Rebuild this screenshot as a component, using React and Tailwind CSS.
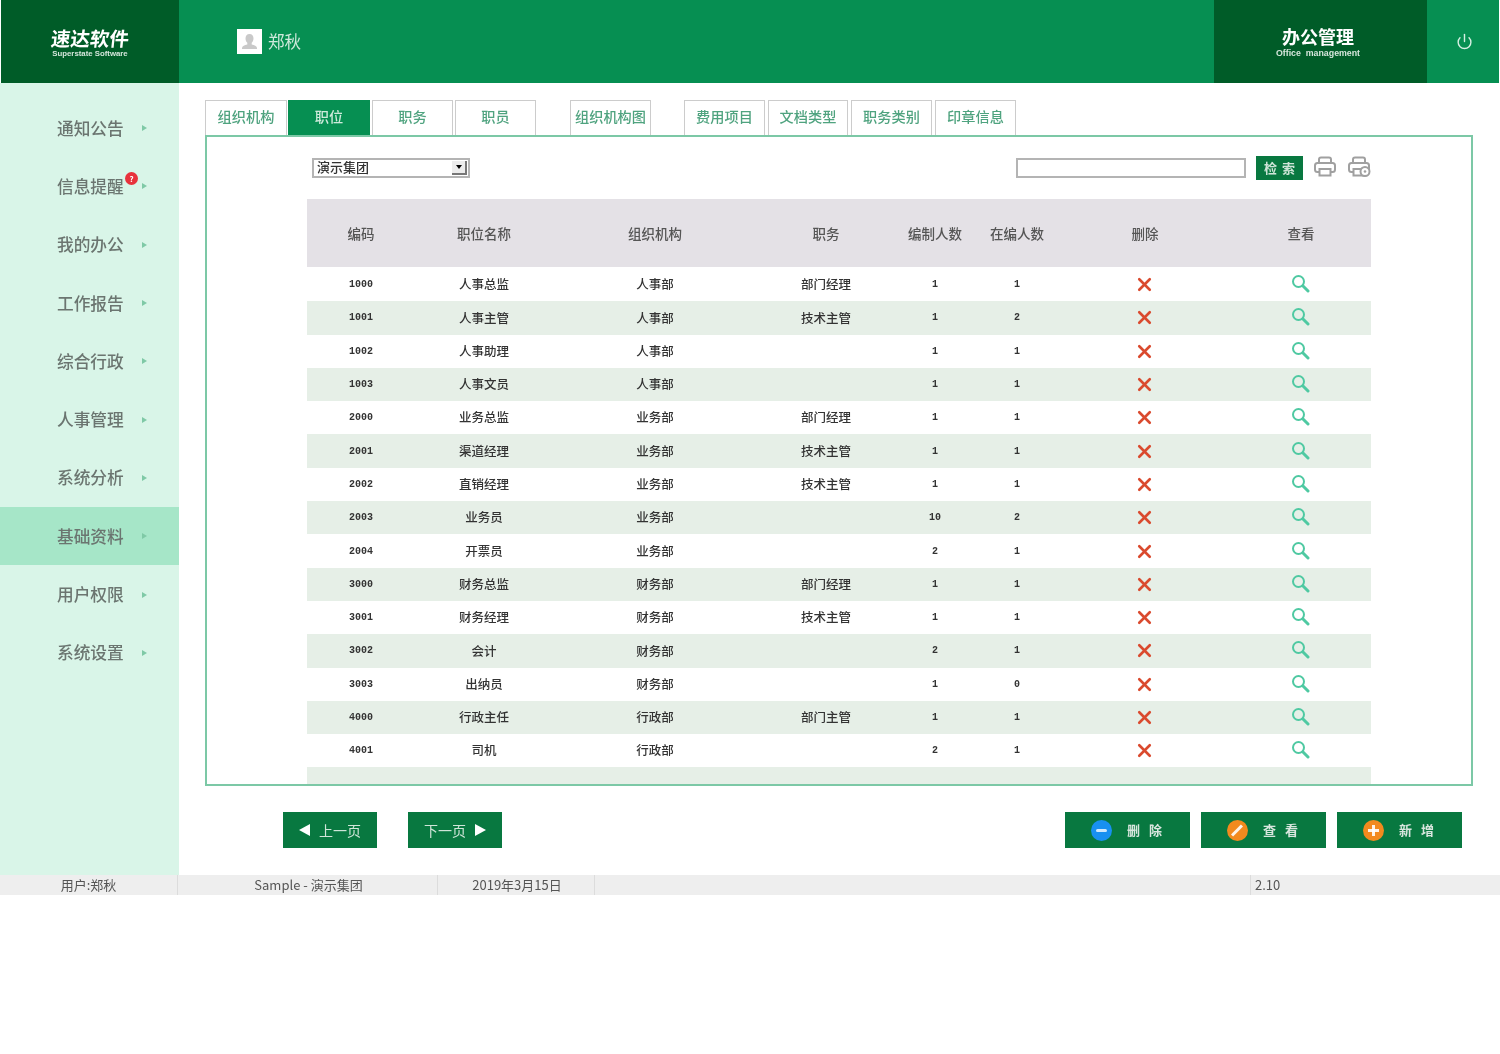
import React from "react";
import { X, Power } from "lucide-react";

const cjk = "font-['Noto_Sans_CJK_SC','Noto_Sans',sans-serif]";
const menu = ["通知公告", "信息提醒", "我的办公", "工作报告", "综合行政", "人事管理", "系统分析", "基础资料", "用户权限", "系统设置"];
const tabs = [
  ["组织机构", "w-[82px]"],
  ["职位", "w-[82px] ml-px"],
  ["职务", "w-[81px] ml-[2px]"],
  ["职员", "w-[81px] ml-[2px]"],
  ["组织机构图", "w-[81px] ml-[34px]"],
  ["费用项目", "w-[81px] ml-[33px]"],
  ["文档类型", "w-[80px] ml-[3px]"],
  ["职务类别", "w-[81px] ml-[3px]"],
  ["印章信息", "w-[81px] ml-[3px]"],
];
const cols = "grid grid-cols-[108px_138px_204px_138px_80px_84px_172px_140px]";
const heads = ["编码", "职位名称", "组织机构", "职务", "编制人数", "在编人数", "删除", "查看"];
const rows = [
  ["1000", "人事总监", "人事部", "部门经理", "1", "1"],
  ["1001", "人事主管", "人事部", "技术主管", "1", "2"],
  ["1002", "人事助理", "人事部", "", "1", "1"],
  ["1003", "人事文员", "人事部", "", "1", "1"],
  ["2000", "业务总监", "业务部", "部门经理", "1", "1"],
  ["2001", "渠道经理", "业务部", "技术主管", "1", "1"],
  ["2002", "直销经理", "业务部", "技术主管", "1", "1"],
  ["2003", "业务员", "业务部", "", "10", "2"],
  ["2004", "开票员", "业务部", "", "2", "1"],
  ["3000", "财务总监", "财务部", "部门经理", "1", "1"],
  ["3001", "财务经理", "财务部", "技术主管", "1", "1"],
  ["3002", "会计", "财务部", "", "2", "1"],
  ["3003", "出纳员", "财务部", "", "1", "0"],
  ["4000", "行政主任", "行政部", "部门主管", "1", "1"],
  ["4001", "司机", "行政部", "", "2", "1"],
];

function Cell({ children, mono }) {
  return (
    <div className={`flex items-center justify-center ${mono ? "font-['Liberation_Mono',monospace] text-[10px] font-bold" : "text-[12.5px] font-medium"}`}>
      {children}
    </div>
  );
}

function Arrow() {
  return <span className="ml-auto h-0 w-0 border-y-[3.5px] border-l-[5px] border-y-transparent border-l-[#7fc9a6]" />;
}

function Lens() {
  return (
    <svg width="19" height="19" viewBox="0 0 19 19" fill="none" className="-translate-x-[1px] -translate-y-[1px]">
      <circle cx="7.500" cy="7.500" r="5.500" stroke="#4fc9a2" strokeWidth="2" />
      <path d="M12 12l5 5" stroke="#4fc9a2" strokeWidth="3" strokeLinecap="round" />
    </svg>
  );
}

function PrinterIcon({ round }) {
  return (
    <svg width="24" height="24" viewBox="0 0 24 24" fill="none" stroke="#a0a0a0" strokeWidth="2">
      <path d="M6 8V4.500C6 3.500 7 2.500 8 2.500h8c1 0 2 1 2 2V8" />
      <path d="M6 17H4.500C3 17 2 16 2 14.500v-4C2 9 3 8 4.500 8h15c1.500 0 2.500 1 2.500 2.500v4c0 1.500-1 2.500-2.500 2.500H18" />
      <path d="M6.500 14h11v6.500h-11z" />
      {round && <circle cx="18" cy="16.500" r="4.500" fill="white" />}
      {round && <circle cx="18" cy="16.500" r="1.300" fill="#a0a0a0" stroke="none" />}
    </svg>
  );
}

function ActionButton({ label, color, sign }) {
  return (
    <button className="flex h-[36px] w-[125px] items-center justify-center gap-[15px] pr-[2px] bg-[#087840] text-[13px] font-bold text-[#d8e6de]">
      <span className={`relative flex h-[21px] w-[21px] items-center justify-center rounded-full ${color}`}>
        {sign === "minus" && <span className="h-[3px] w-[11px] rounded-sm bg-white/80" />}
        {sign === "edit" && <span className="h-[3px] w-[14px] -rotate-45 bg-white/90" />}
        {sign === "plus" && (
          <>
            <span className="h-[3px] w-[11px] bg-white/90" />
            <span className="absolute h-[11px] w-[3px] bg-white/90" />
          </>
        )}
      </span>
      <span className="-mr-[9px] tracking-[9px]">{label}</span>
    </button>
  );
}

export default function App() {
  return (
    <div className={`flex h-[895px] flex-col bg-white text-[#333] blur-[0.7px] ${cjk}`}>
      <header className="mx-px flex h-[83px] shrink-0 bg-[#068f52] text-white">
        <div className="flex w-[178px] flex-col items-center justify-center bg-[#005c28]">
          <div className="-skew-x-6 text-[19.5px] font-bold leading-[24px]">速达软件</div>
          <div className="font-['Liberation_Sans',sans-serif] text-[7.8px] font-bold leading-[7px] text-[#d5e6dc]">Superstate Software</div>
        </div>
        <div className="ml-[58px] flex items-center gap-[6px]">
          <svg width="25" height="25" viewBox="0 0 25 25" className="bg-white">
            <path d="M12.500 5c2.600 0 4 2 4 4.500 0 1.800-.8 3.300-1.800 4.200v1.800c2.500.7 5.300 1.800 5.300 3.500v1H5v-1c0-1.700 2.800-2.800 5.300-3.500v-1.800c-1-.9-1.800-2.400-1.800-4.200C8.500 7 9.900 5 12.500 5z" fill="#c9c9c9" />
          </svg>
          <span className="text-[16.5px] text-[#cfe9dc]">郑秋</span>
        </div>
        <div className="ml-auto flex w-[213px] flex-col items-center justify-center bg-[#005c28] pb-[2px] pr-[5px]">
          <div className="text-[18px] font-bold leading-[25px]">办公管理</div>
          <div className="font-['Liberation_Sans',sans-serif] text-[8.8px] font-bold leading-[9px] text-[#d5e6dc]">Office&nbsp;&nbsp;management</div>
        </div>
        <div className="flex w-[72px] items-center justify-center pl-[2px]">
          <Power size={17} strokeWidth={2} className="text-[#d5efe2]" />
        </div>
      </header>

      <div className="flex min-h-0 flex-1">
        <aside className="w-[179px] shrink-0 bg-[#d9f5e8] pt-[16px]">
          {menu.map((m, i) => (
            <div key={m} className={`relative flex h-[58.3px] items-center pl-[57px] pr-[32px] text-[16.7px] font-medium text-[#6b7570] ${i === 7 ? "bg-[#a6e6c8]" : ""}`}>
              <span className="whitespace-nowrap">{m}</span>
              {i === 1 && (
                <span className="absolute left-[125px] top-[15px] flex h-[13px] w-[13px] items-center justify-center rounded-full bg-[#e8323c] text-[8px] font-bold text-white">?</span>
              )}
              <Arrow />
            </div>
          ))}
        </aside>

        <main className="min-w-0 flex-1 pl-[26px] pr-[27px] pt-[17px]">
          <div className="flex h-[35px]">
            {tabs.map(([t, w], i) => (
              <div
                key={t}
                className={`flex items-center justify-center whitespace-nowrap border-x border-t pb-[2px] text-[14.2px] font-medium ${w} ${
                  i === 1 ? "border-[#068f52] bg-[#068f52] text-[#cdeadb]" : "border-[#cccccc] bg-white text-[#4fa37f]"
                }`}
              >
                {t}
              </div>
            ))}
          </div>

          <section className="h-[651px] overflow-hidden border-2 border-[#7cc8a6]">
            <div className="flex h-[62px] items-center pl-[105px] pr-[100px]">
              <div className="flex h-[20px] w-[158px] items-center justify-between border-2 border-[#b4b4b4] bg-white pl-[3px] text-[13px] font-medium leading-none text-[#333]">
                <span className="-translate-y-[2px]">演示集团</span>
                <span className="mr-px flex h-[14px] w-[15px] items-center justify-center border-b-2 border-r-2 border-[#777] bg-[#ececec]">
                  <span className="h-0 w-0 border-x-[3.5px] border-t-[4px] border-x-transparent border-t-black" />
                </span>
              </div>
              <div className="ml-auto h-[20px] w-[230px] border-2 border-[#b4b4b4] bg-white" />
              <button className="ml-[10px] flex h-[24px] w-[47px] items-center justify-center bg-[#087840] text-[13px] font-bold tracking-[5px] text-[#cfe5d8]">
                <span className="-mr-[5px]">检索</span>
              </button>
              <span className="ml-[10px] flex -translate-y-[1px]"><PrinterIcon /></span>
              <span className="ml-[10px] flex -translate-y-[1px]"><PrinterIcon round /></span>
            </div>

            <div className="ml-[100px] w-[1064px]">
              <div className={`${cols} mb-px h-[68px] bg-[#e4e1e6] font-medium text-[#555]`}>
                {heads.map((h) => (
                  <div key={h} className="flex items-center justify-center text-[13.5px]">{h}</div>
                ))}
              </div>
              {rows.map((r, i) => (
                <div key={r[0]} className={`${cols} h-[33.3px] ${i % 2 ? "bg-[#e6efe7]" : "bg-white"}`}>
                  <Cell mono>{r[0]}</Cell>
                  <Cell>{r[1]}</Cell>
                  <Cell>{r[2]}</Cell>
                  <Cell>{r[3]}</Cell>
                  <Cell mono>{r[4]}</Cell>
                  <Cell mono>{r[5]}</Cell>
                  <Cell><X size={21} strokeWidth={3} className="-translate-x-[1px] text-[#da4a2e]" /></Cell>
                  <Cell><Lens /></Cell>
                </div>
              ))}
              <div className="h-[20px] bg-[#e6efe7]" />
            </div>
          </section>

          <div className="mt-[26px] flex pl-[78px] pr-[11px]">
            <button className="flex h-[36px] w-[94px] items-center justify-center gap-[9px] bg-[#087840] text-[14px] text-[#cfe5d8]">
              <span className="h-0 w-0 border-y-[6px] border-r-[11px] border-y-transparent border-r-white" />
              上一页
            </button>
            <button className="ml-[31px] flex h-[36px] w-[94px] items-center justify-center gap-[9px] bg-[#087840] text-[14px] text-[#cfe5d8]">
              下一页
              <span className="h-0 w-0 border-y-[6px] border-l-[11px] border-y-transparent border-l-white" />
            </button>
            <div className="ml-auto flex gap-[11px]">
              <ActionButton label="删除" color="bg-[#1890f0]" sign="minus" />
              <ActionButton label="查看" color="bg-[#f28a1e]" sign="edit" />
              <ActionButton label="新增" color="bg-[#f28a1e]" sign="plus" />
            </div>
          </div>
        </main>
      </div>

      <footer className="flex h-[20px] shrink-0 bg-[#eeeeee] text-[13px] leading-[20px] text-[#555]">
        <div className="w-[178px] border-r border-[#dcdcdc] text-center">用户:郑秋</div>
        <div className="w-[260px] border-r border-[#dcdcdc] pl-[2px] text-center">Sample - 演示集团</div>
        <div className="w-[157px] border-r border-[#dcdcdc] pl-[2px] text-center">2019年3月15日</div>
        <div className="flex-1 border-r border-[#dcdcdc]" />
        <div className="w-[249px] pl-[4px]">2.10</div>
      </footer>
    </div>
  );
}
